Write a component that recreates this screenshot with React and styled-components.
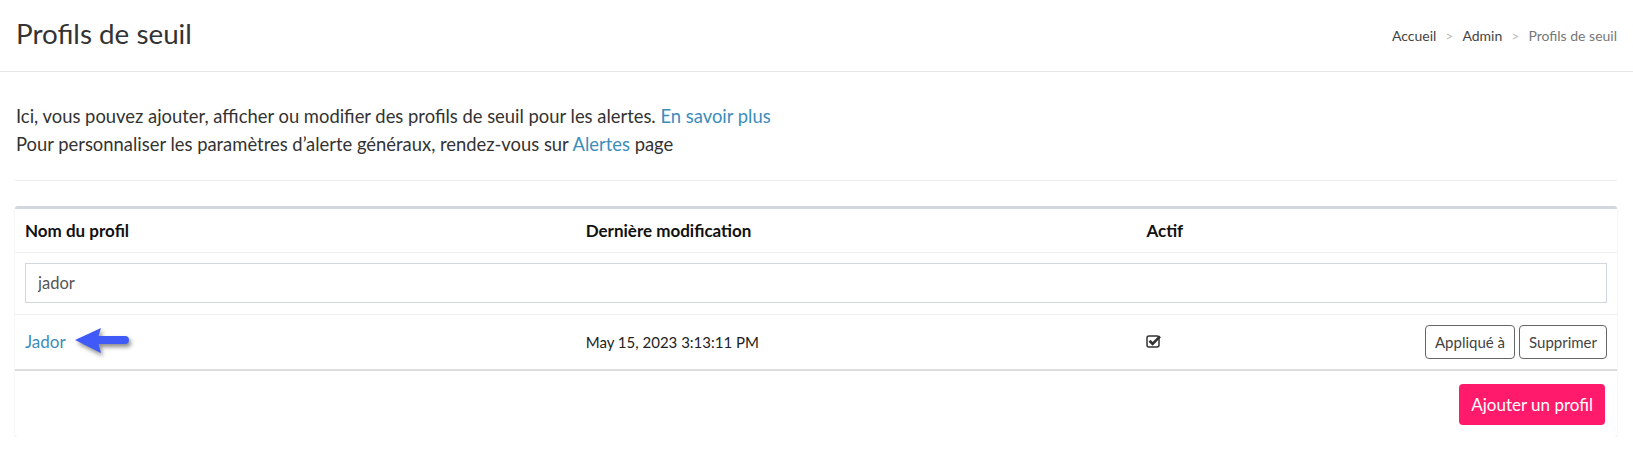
import React from 'react';
import styled, { createGlobalStyle } from 'styled-components';

const GlobalStyle = createGlobalStyle`
  body {
    margin: 0;
    background: #fff;
    color: #333;
    font-family: "Source Sans Pro", Lato, "Liberation Sans", sans-serif;
  }
  * { box-sizing: border-box; }
`;

const Header = styled.header`
  display: flex;
  align-items: center;
  justify-content: space-between;
  height: 72px;
  padding: 0 16px 0 16px;
  border-bottom: 1px solid #e6e6e6;
`;
const Title = styled.h1`
  margin: 0;
  font-size: 27.8px;
  font-weight: 400;
  color: #333;
  padding-bottom: 4px;
`;
const Crumbs = styled.ol`
  display: flex;
  list-style: none;
  margin: 0;
  padding: 0;
  font-size: 14px;
  color: #444;
`;
const Crumb = styled.li`
  color: ${p => (p.$active ? '#777' : '#444')};
  &:not(:first-child)::before {
    content: '>';
    color: #bbb;
    padding: 0 9px;
  }
`;

const Content = styled.main`
  padding: 30px 16px 0 15px;
`;
const Intro = styled.p`
  margin: 0;
  font-size: 18.4px;
  line-height: 28px;
  padding-left: 1px;
`;
const Link = styled.a`
  color: #3c8dbc;
  text-decoration: none;
`;
const Divider = styled.hr`
  border: 0;
  border-top: 1px solid #eee;
  margin: 22px 0 25px;
`;

const Box = styled.section`
  border-top: 3px solid #d2d6de;
  border-radius: 3px;
  background: #fff;
  box-shadow: 0 1px 2px rgba(0, 0, 0, 0.12);
`;
const Table = styled.table`
  width: 100%;
  border-collapse: collapse;
  font-size: 16px;
`;
const HeadCell = styled.th`
  text-align: left;
  font-weight: 700;
  font-size: 17px;
  color: #111;
  height: 43px;
  padding: 0 10px;
  width: ${p => p.$w || 'auto'};
  border-bottom: 1px solid #f0f0f0;
`;
const Cell = styled.td`
  padding: 0 10px;
  height: ${p => p.$h || 56}px;
  text-align: ${p => p.$align || 'left'};
  border-bottom: ${p => (p.$strong ? '2px solid #ddd' : '1px solid #f0f0f0')};
  white-space: nowrap;
`;
const Filter = styled.input`
  width: 100%;
  height: 40px;
  border: 1px solid #d2d6de;
  padding: 0 12px;
  font: inherit;
  font-size: 16.5px;
  color: #555;
  outline: none;
`;
const NameWrap = styled.span`
  display: inline-flex;
  align-items: center;
  gap: 8px;
  font-size: 17px;
`;
const DateText = styled.span`
  font-size: 15px;
  color: #222;
`;
const Actions = styled.div`
  display: inline-flex;
  gap: 4px;
`;
const Button = styled.button`
  font: inherit;
  font-size: 15px;
  color: #444;
  background: #fff;
  border: 1px solid #666;
  border-radius: 4px;
  height: 34px;
  padding: 0 9px;
`;
const Footer = styled.div`
  display: flex;
  justify-content: flex-end;
  padding: 13px 12px 12px;
`;
const Primary = styled.button`
  font: inherit;
  font-size: 17px;
  color: #fff;
  background: #ff1a6b;
  border: 0;
  border-radius: 4px;
  height: 41px;
  padding: 0 12px;
`;

const Arrow = () => (
  <svg width="58" height="32" viewBox="0 0 58 32" style={{ filter: 'drop-shadow(2px 3px 2px rgba(0,0,0,0.45))' }}>
    <path
      d="M1 14 L27 2 L24.5 10 L51 10 Q55 10 55 14 Q55 18 51 18 L24.5 18 L27 27 Z"
      fill="#3f5af6"
    />
  </svg>
);

const CheckIcon = () => (
  <svg width="16" height="14" viewBox="0 0 16 14">
    <rect x="1" y="2" width="12" height="11" rx="2" fill="none" stroke="#333" strokeWidth="1.5" />
    <path d="M3.5 6.8 L6.6 9.8 L14 2.3" fill="none" stroke="#333" strokeWidth="2.6" />
  </svg>
);

export default function App() {
  return (
    <>
      <GlobalStyle />
      <Header>
        <Title>Profils de seuil</Title>
        <Crumbs>
          <Crumb>Accueil</Crumb>
          <Crumb>Admin</Crumb>
          <Crumb $active>Profils de seuil</Crumb>
        </Crumbs>
      </Header>
      <Content>
        <Intro>
          Ici, vous pouvez ajouter, afficher ou modifier des profils de seuil pour les alertes.{' '}
          <Link href="#">En savoir plus</Link>
          <br />
          Pour personnaliser les paramètres d’alerte généraux, rendez-vous sur <Link href="#">Alertes</Link> page
        </Intro>
        <Divider />
        <Box>
          <Table>
            <thead>
              <tr>
                <HeadCell $w="35%">Nom du profil</HeadCell>
                <HeadCell $w="35%">Dernière modification</HeadCell>
                <HeadCell>Actif</HeadCell>
                <HeadCell />
              </tr>
            </thead>
            <tbody>
              <tr>
                <Cell colSpan={4} $h={62}>
                  <Filter defaultValue="jador" />
                </Cell>
              </tr>
              <tr>
                <Cell $strong>
                  <NameWrap>
                    <Link href="#">Jador</Link>
                    <Arrow />
                  </NameWrap>
                </Cell>
                <Cell $strong>
                  <DateText>May 15, 2023 3:13:11 PM</DateText>
                </Cell>
                <Cell $strong>
                  <CheckIcon />
                </Cell>
                <Cell $strong $align="right">
                  <Actions>
                    <Button>Appliqué à</Button>
                    <Button>Supprimer</Button>
                  </Actions>
                </Cell>
              </tr>
            </tbody>
          </Table>
          <Footer>
            <Primary>Ajouter un profil</Primary>
          </Footer>
        </Box>
      </Content>
    </>
  );
}
